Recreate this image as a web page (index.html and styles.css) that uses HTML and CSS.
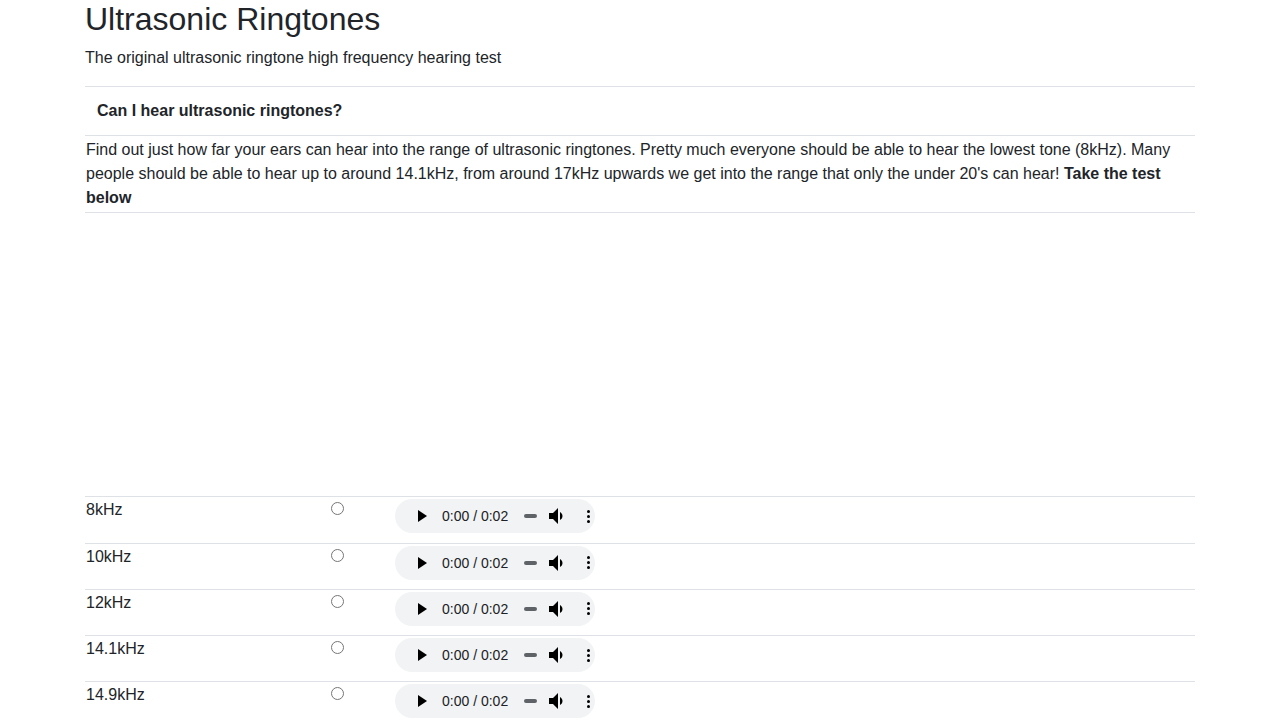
FILE: index.html
```html
<!DOCTYPE html>
<html lang="en">
<head>
<meta charset="utf-8">
<title>Ultrasonic Ringtones</title>
<link rel="stylesheet" href="styles.css">
</head>
<body>
<div class="container">
  <h1 class="title">Ultrasonic Ringtones</h1>
  <p class="lead">The original ultrasonic ringtone high frequency hearing test</p>

  <section class="intro">
    <div class="intro-head">Can I hear ultrasonic ringtones?</div>
    <div class="intro-body">Find out just how far your ears can hear into the range of ultrasonic ringtones. Pretty much everyone should be able to hear the lowest tone (8kHz). Many people should be able to hear up to around 14.1kHz, from around 17kHz upwards we get into the range that only the under 20's can hear! <b>Take the test below</b></div>
  </section>

  <div class="ad-space"></div>

  <section class="tones">
    <div class="tone-row">
      <div class="tone-label">8kHz</div>
      <div class="tone-radio"><input type="radio" name="heard"></div>
      <div class="tone-player">
        <div class="player">
          <svg class="play" viewBox="0 0 9 12"><polygon points="0,0 9,6 0,12"/></svg>
          <span class="time">0:00 / 0:02</span>
          <span class="seek"></span>
          <svg class="vol" viewBox="4 4 15 16"><path d="M18.5 12c0-1.77-1.02-3.290-2.5-4.03v8.05c1.48-.73 2.5-2.25 2.5-4.02zM5 9v6h4l5 5V4L9 9H5z"/></svg>
          <span class="kebab"><i></i><i></i><i></i></span>
        </div>
      </div>
    </div>
    <div class="tone-row">
      <div class="tone-label">10kHz</div>
      <div class="tone-radio"><input type="radio" name="heard"></div>
      <div class="tone-player">
        <div class="player">
          <svg class="play" viewBox="0 0 9 12"><polygon points="0,0 9,6 0,12"/></svg>
          <span class="time">0:00 / 0:02</span>
          <span class="seek"></span>
          <svg class="vol" viewBox="4 4 15 16"><path d="M18.5 12c0-1.77-1.02-3.29-2.5-4.03v8.05c1.48-.73 2.5-2.25 2.5-4.02zM5 9v6h4l5 5V4L9 9H5z"/></svg>
          <span class="kebab"><i></i><i></i><i></i></span>
        </div>
      </div>
    </div>
    <div class="tone-row">
      <div class="tone-label">12kHz</div>
      <div class="tone-radio"><input type="radio" name="heard"></div>
      <div class="tone-player">
        <div class="player">
          <svg class="play" viewBox="0 0 9 12"><polygon points="0,0 9,6 0,12"/></svg>
          <span class="time">0:00 / 0:02</span>
          <span class="seek"></span>
          <svg class="vol" viewBox="4 4 15 16"><path d="M18.5 12c0-1.77-1.02-3.29-2.5-4.03v8.05c1.48-.73 2.5-2.25 2.5-4.02zM5 9v6h4l5 5V4L9 9H5z"/></svg>
          <span class="kebab"><i></i><i></i><i></i></span>
        </div>
      </div>
    </div>
    <div class="tone-row">
      <div class="tone-label">14.1kHz</div>
      <div class="tone-radio"><input type="radio" name="heard"></div>
      <div class="tone-player">
        <div class="player">
          <svg class="play" viewBox="0 0 9 12"><polygon points="0,0 9,6 0,12"/></svg>
          <span class="time">0:00 / 0:02</span>
          <span class="seek"></span>
          <svg class="vol" viewBox="4 4 15 16"><path d="M18.5 12c0-1.77-1.02-3.29-2.5-4.03v8.05c1.48-.73 2.5-2.25 2.5-4.02zM5 9v6h4l5 5V4L9 9H5z"/></svg>
          <span class="kebab"><i></i><i></i><i></i></span>
        </div>
      </div>
    </div>
    <div class="tone-row">
      <div class="tone-label">14.9kHz</div>
      <div class="tone-radio"><input type="radio" name="heard"></div>
      <div class="tone-player">
        <div class="player">
          <svg class="play" viewBox="0 0 9 12"><polygon points="0,0 9,6 0,12"/></svg>
          <span class="time">0:00 / 0:02</span>
          <span class="seek"></span>
          <svg class="vol" viewBox="4 4 15 16"><path d="M18.5 12c0-1.77-1.02-3.29-2.5-4.03v8.05c1.48-.73 2.5-2.25 2.5-4.02zM5 9v6h4l5 5V4L9 9H5z"/></svg>
          <span class="kebab"><i></i><i></i><i></i></span>
        </div>
      </div>
    </div>
  </section>
</div>
</body>
</html>
```

FILE: styles.css
```css
* { box-sizing: border-box; }

html, body {
  margin: 0;
  padding: 0;
  background: #fff;
}

body {
  font-family: "Liberation Sans", Arial, Helvetica, sans-serif;
  font-size: 16px;
  line-height: 24px;
  color: #212529;
}

.container {
  width: 1110px;
  margin: 0 auto;
}

.title {
  margin: 0 0 8px;
  font-size: 32px;
  line-height: 38.4px;
  font-weight: 400;
}

.lead {
  margin: 0 0 16px;
}

.intro-head {
  border-top: 1px solid #dee2e6;
  padding: 12px;
  font-weight: 700;
}

.intro-body {
  border-top: 1px solid #dee2e6;
  border-bottom: 1px solid #dee2e6;
  padding: 2px 2px 2px 1px;
}

.ad-space {
  height: 283px;
}

.tone-row {
  display: grid;
  grid-template-columns: 240px 69px 1fr;
  height: 46.25px;
  border-top: 1px solid #dee2e6;
}

.tone-label,
.tone-radio,
.tone-player {
  padding: 1px;
}

.tone-radio input {
  margin: 3px 3px 0 5px;
  width: 13px;
  height: 13px;
  vertical-align: baseline;
}

.player {
  width: 200px;
  height: 34px;
  margin-top: 1px;
  border-radius: 17px;
  background: #f1f3f4;
  display: flex;
  align-items: center;
  color: #000;
}

.play {
  width: 9px;
  height: 12px;
  margin-left: 23px;
  fill: #000;
  flex: none;
}

.time {
  margin-left: 15px;
  font-size: 14px;
  line-height: 16px;
  color: #202124;
  white-space: nowrap;
}

.seek {
  width: 13px;
  height: 4px;
  border-radius: 2px;
  background: #5f6368;
  margin-left: 16px;
  flex: none;
}

.vol {
  width: 15px;
  height: 16px;
  margin-left: 11px;
  fill: #000;
  flex: none;
}

.kebab {
  display: flex;
  flex-direction: column;
  gap: 2px;
  margin-left: 24px;
}

.kebab i {
  display: block;
  width: 3px;
  height: 3px;
  border-radius: 50%;
  background: #000;
}
```
